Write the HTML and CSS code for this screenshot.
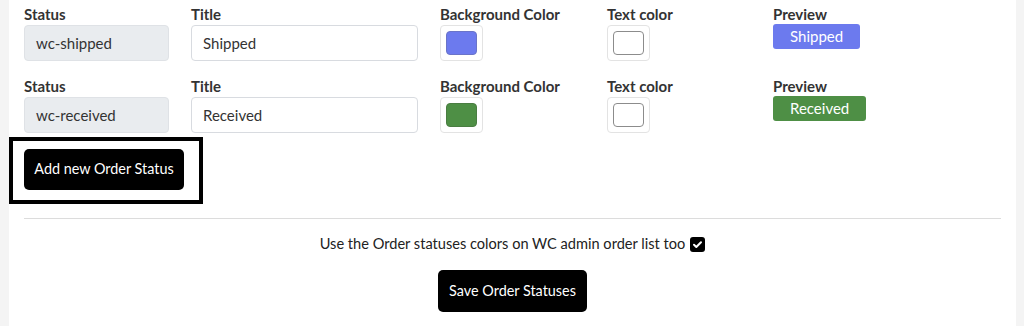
FILE: index.html
```html
<!DOCTYPE html>
<html>
<head>
<meta charset="utf-8">
<link rel="stylesheet" href="styles.css">
</head>
<body>
<div class="page">
  <div class="card">
    <div class="status-row">
      <div class="field"><label class="lbl">Status</label><div class="input readonly">wc-shipped</div></div>
      <div class="field"><label class="lbl">Title</label><div class="input">Shipped</div></div>
      <div class="field"><label class="lbl">Background Color</label><div class="swatch"><span class="chip chip-blue"></span></div></div>
      <div class="field"><label class="lbl">Text color</label><div class="swatch"><span class="chip chip-white"></span></div></div>
      <div class="field"><label class="lbl">Preview</label><span class="badge badge-blue">Shipped</span></div>
    </div>
    <div class="status-row">
      <div class="field"><label class="lbl">Status</label><div class="input readonly">wc-received</div></div>
      <div class="field"><label class="lbl">Title</label><div class="input">Received</div></div>
      <div class="field"><label class="lbl">Background Color</label><div class="swatch"><span class="chip chip-green"></span></div></div>
      <div class="field"><label class="lbl">Text color</label><div class="swatch"><span class="chip chip-white"></span></div></div>
      <div class="field"><label class="lbl">Preview</label><span class="badge badge-green">Received</span></div>
    </div>
    <div class="add-wrap">
      <button class="btn">Add new Order Status</button>
    </div>
    <hr class="sep">
    <div class="option">
      <span>Use the Order statuses colors on WC admin order list too</span>
      <span class="check"><svg viewBox="0 0 15 15" width="15" height="15"><path d="M4 7.8 L6.3 10 L11 5.2" fill="none" stroke="#fff" stroke-width="2" stroke-linecap="round" stroke-linejoin="round"/></svg></span>
    </div>
    <div class="save-row">
      <button class="btn btn-save">Save Order Statuses</button>
    </div>
  </div>
</div>
</body>
</html>
```

FILE: styles.css
```css
* { box-sizing: border-box; }
html, body { margin: 0; padding: 0; }
body {
  font-family: Lato, "Noto Sans", sans-serif;
  color: #212529;
  background: #f4f4f4;
  width: 1024px;
  height: 326px;
  overflow: hidden;
}
.page {
  padding: 0 8px 0 9px;
  height: 326px;
}
.card {
  background: #fff;
  height: 326px;
  padding: 4px 15px 0 15px;
}
.status-row {
  display: grid;
  grid-template-columns: 145px 227px 145px 144px 200px;
  column-gap: 22px;
  margin-bottom: 15px;
}
.field { display: flex; flex-direction: column; align-items: flex-start; }
.lbl {
  font-weight: 700;
  font-size: 15px;
  line-height: 21px;
  height: 21px;
  color: #333;
}
.input {
  width: 100%;
  height: 36px;
  border: 1px solid #d8dbe0;
  border-radius: 4px;
  padding: 0 11px;
  font-size: 15px;
  line-height: 34px;
  color: #333;
  background: #fff;
  white-space: nowrap;
}
.input.readonly { background: #e9ecef; border-color: #dfe2e6; }
.swatch {
  width: 43px;
  height: 36px;
  border: 1px solid #e3e3e3;
  border-radius: 4px;
  display: flex;
  align-items: center;
  justify-content: center;
}
.chip {
  width: 31px;
  height: 24px;
  border-radius: 4px;
  border: 1px solid #999;
}
.chip-blue { background: #6c7aee; border-color: #6a74c8; }
.chip-green { background: #4e8f45; border-color: #4a7d42; }
.chip-white { background: #fff; border-color: #8c8c8c; }
.badge {
  display: inline-block;
  margin-top: -1px;
  height: 25px;
  padding: 0 17px;
  border-radius: 3px;
  color: #fff;
  font-size: 15px;
  line-height: 25px;
  white-space: nowrap;
}
.badge-blue { background: #6c7aee; }
.badge-green { background: #4e8f45; }
.add-wrap {
  display: inline-block;
  margin: -11px 0 0 -15px;
  border: 4px solid #000;
  padding: 8px 15px 10px 11px;
}
.btn {
  font-family: inherit;
  background: #000;
  color: #fff;
  border: none;
  border-radius: 5px;
  font-size: 14.4px;
  height: 41px;
  padding: 0 0 2px;
  display: block;
  white-space: nowrap;
}
.add-wrap .btn { width: 160px; }
.sep {
  border: 0;
  border-top: 1px solid #dcdcdc;
  margin: 14px 0 0 0;
}
.option {
  display: flex;
  justify-content: center;
  align-items: center;
  gap: 5px;
  margin-top: 15px;
  font-size: 14.6px;
  line-height: 20px;
  color: #222;
}
.check {
  width: 15px;
  height: 15px;
  background: #000;
  border-radius: 3px;
  display: inline-flex;
}
.save-row {
  display: flex;
  justify-content: center;
  margin-top: 16px;
}
.btn-save { width: 149px; height: 42px; }
```
